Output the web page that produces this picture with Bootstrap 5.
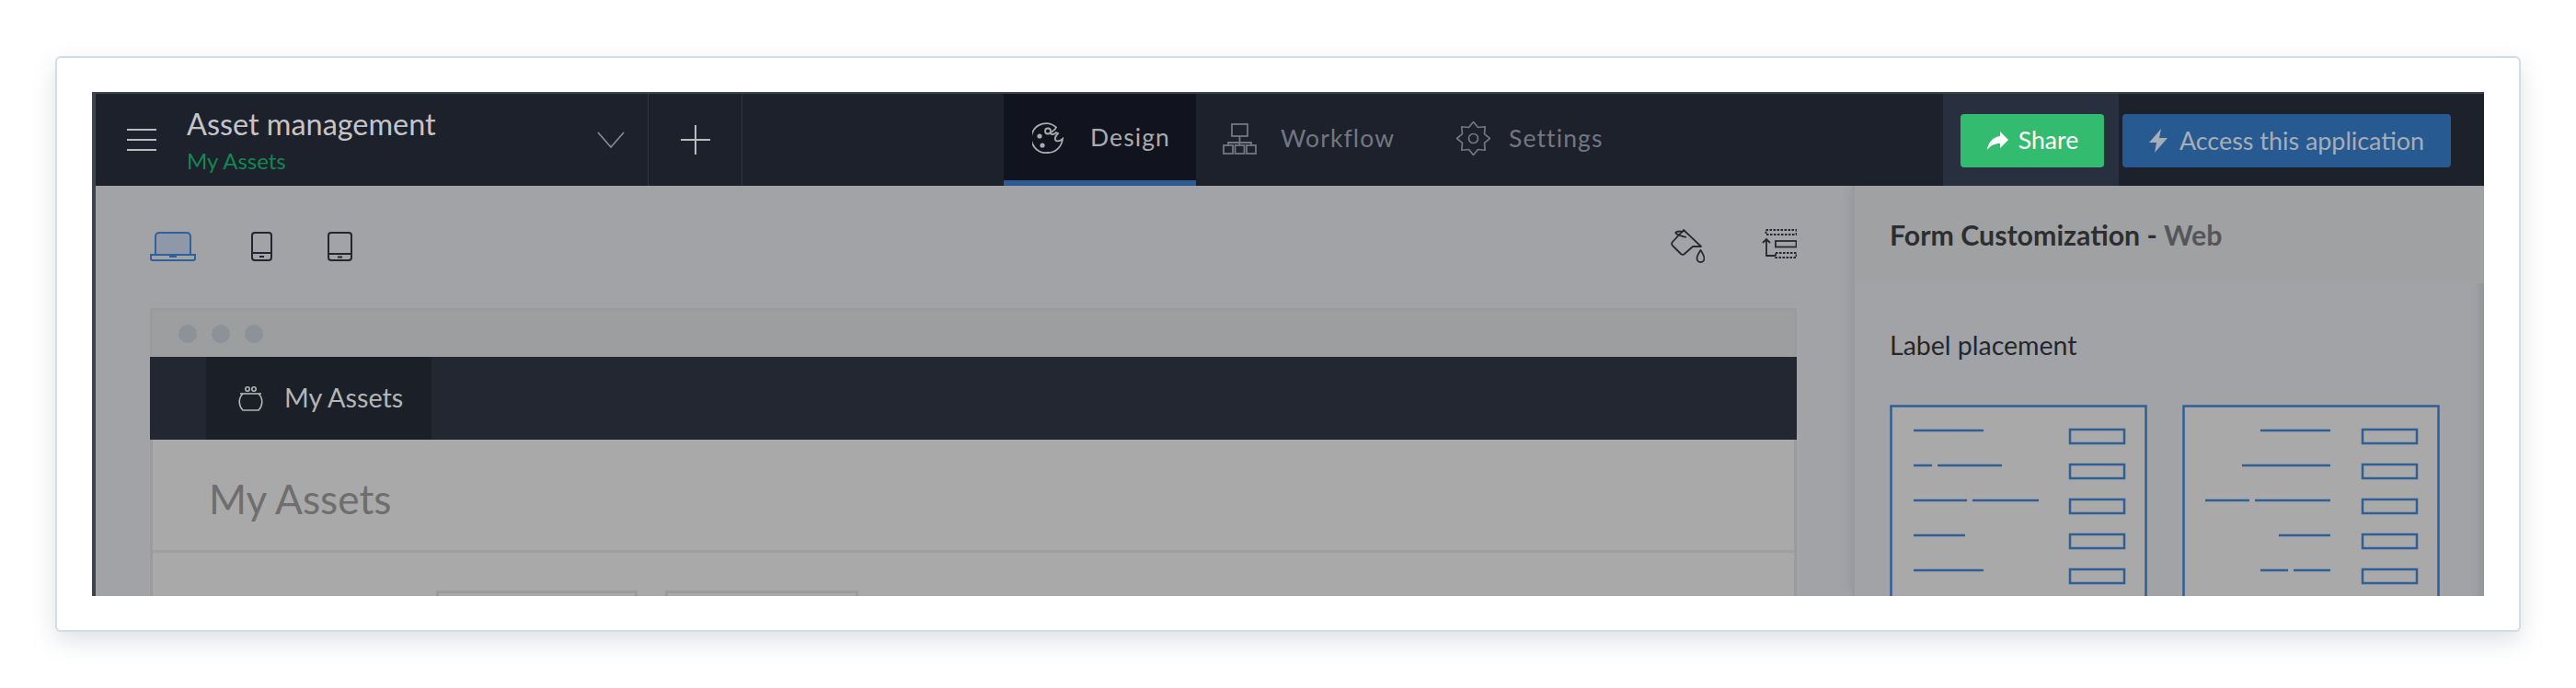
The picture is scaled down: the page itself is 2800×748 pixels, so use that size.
<!doctype html>
<html lang="en">
<head>
<meta charset="utf-8">
<title>Form Customization</title>
<link rel="stylesheet" href="https://cdn.jsdelivr.net/npm/bootstrap@5.3.0/dist/css/bootstrap.min.css">
<style>
html,body{background:#fff;height:748px;overflow:hidden}
body{font-family:Lato,"Liberation Sans",sans-serif;padding:61px 60px 0}
.shot-card{width:2680px;height:626px;padding:38px 39px 0 38px;background:#fff;border:2px solid #d2dde3;border-radius:6px;box-shadow:0 10px 26px rgba(110,125,140,.22)}
.screen{height:548px;overflow:hidden;background:#a2a3a7;border-left:4px solid #3d434f;border-top:2px solid #3d434f;margin:-1px 0 0 0;width:2600px}
.topbar{height:100px;background:#1c212c}
.burger{width:99px}
.burger svg{margin-left:34px}
.app-cell{width:502px;border-right:1px solid #2e3440}
.app-name{font-size:32.4px;line-height:38px;color:#c4c5c8;margin-top:14px}
.app-sub{font-size:24px;line-height:30px;color:#158651;margin-top:6px}
.plus-cell{width:102px;border-right:1px solid #2e3440}
.tab-item{height:100px;font-size:26.5px;letter-spacing:1.1px;color:#727782;text-decoration:none;padding-bottom:3px}
.tab-on{width:209px;padding-left:31px;padding-top:2px;background:#11141e;color:#a9abaf;border-bottom:6px solid #2a5c93;padding-bottom:0}
.tab-gap{margin-left:29px}
.tab-two{margin-left:67px}
.tab-item svg{flex:none}
.tab-on span{margin-left:29px}
.tab-flow span{margin-left:26px}
.tab-gear span{margin-left:20px}
.share-zone{margin-left:auto;width:191px;height:100px;background:#283040;padding:22px 16px 0 19px}
.access-zone{width:397px;padding:22px 36px 0 4px;height:100px}
.btn.share-btn,.btn.access-btn{height:58px;width:100%;padding:0;border:0;border-radius:4px;font-family:inherit;display:flex;align-items:center;justify-content:center}
.btn.share-btn{background:#33bb70;color:#fff;gap:11px;font-size:26.6px}
.btn.access-btn{background:#285a92;color:#a7adb6;gap:13px;font-size:26.9px}
.workarea{height:446px}
.canvas-side{width:1909px;padding:0 60px 0 59px}
.toolbar{height:133px}
.device-set{gap:60px;padding-top:50px;height:100%}
.tool-set{padding-top:47px;height:100%;gap:62px}
.frame-box{border:3px solid #9b9b9c;border-bottom:0;background:#a9a9a9;height:400px}
.frame-dots{height:50px;background:#9d9e9f;padding-left:28px;gap:16px}
.frame-dots i{display:block;width:20px;height:20px;border-radius:50%;background:#8d9299}
.inner-nav{height:90px;background:#232732;margin:0 -3px;padding-left:61px}
.inner-active{width:245px;height:90px;background:#1b1f27;color:#b3b5b8;font-size:28.800px;padding-left:34px;gap:22px}
.inner-title{height:123px;padding:39px 0 0 61px;font-size:44.200px;line-height:50px;color:#6e6e6e;border-bottom:3px solid #9f9f9f}
.inner-fields{padding:41px 0 0 308px;gap:30px}
.inner-fields i{display:block;height:40px;background:#a9a9a9;border:3px solid #9b9b9b}
.field-a{width:219px}
.field-b{width:210px}
.panel-side{width:687px;background:#a2a3a7;border-left:3px solid #989aa0;box-shadow:inset -14px 0 12px -10px rgba(60,60,70,.16),-8px 0 10px -6px rgba(60,60,70,.12)}
.panel-head{height:106px;background:#a0a1a3;padding:33px 0 0 38px;font-size:30.300px;line-height:40px;font-weight:700;color:#2d2e30}
.panel-head span{font-weight:700;color:#555659}
.panel-label{padding:49px 0 0 38px;font-size:28.500px;line-height:36px;color:#26272a}
.thumbs{padding:47px 0 0 38px;gap:38px}
.thumb{display:block;flex:none}
</style>
</head>
<body>
<div class="card shot-card">
  <div class="screen">
    <div class="topbar d-flex">
      <div class="burger d-flex align-items-center">
        <svg width="32" height="24" viewBox="0 0 32 24" fill="none" stroke="#b9bbbe" stroke-width="2"><path d="M0 1h32M0 12h32M0 23h32"/></svg>
      </div>
      <div class="app-cell d-flex">
        <div class="flex-grow-1">
          <div class="app-name">Asset management</div>
          <div class="app-sub">My Assets</div>
        </div>
        <div class="d-flex align-items-center" style="padding-right:25px">
          <svg width="30" height="18" viewBox="0 0 30 18" fill="none" stroke="#8a8d93" stroke-width="1.6"><path d="M1 1l14 16L29 1"/></svg>
        </div>
      </div>
      <div class="plus-cell d-flex align-items-center justify-content-center">
        <svg width="32" height="32" viewBox="0 0 32 32" fill="none" stroke="#b9bbbe" stroke-width="2"><path d="M16 0v32M0 16h32"/></svg>
      </div>
      <div style="width:284px"></div>
      <a class="tab-item tab-on d-flex align-items-center" href="#">
        <svg width="34" height="34" viewBox="0 0 34 34" fill="none" stroke="#a9abaf" stroke-width="1.8"><path d="M26 5.500A16 16 0 1 0 17 33c8 0 15-6 16-15-3 3-7 3-8 1-1-3 1-5 3-7l-2-1c-2 2-5 3-6 1 0-2 5-3 6-6.500z"/><circle cx="17" cy="9.500" r="3"/><circle cx="8" cy="15" r="2.600" fill="#a9abaf" stroke="none"/><circle cx="11" cy="25" r="2.600" fill="#a9abaf" stroke="none"/></svg>
        <span>Design</span>
      </a>
      <a class="tab-item tab-gap tab-flow d-flex align-items-center" href="#">
        <svg width="37" height="34" viewBox="0 0 37 34" fill="none" stroke="#727782" stroke-width="1.800"><rect x="10" y="1" width="17" height="13"/><path d="M18.500 14v10M6 24v-3h25v3"/><rect x="1" y="24" width="10" height="9"/><rect x="13.500" y="24" width="10" height="9"/><rect x="26" y="24" width="10" height="9"/></svg>
        <span>Workflow</span>
      </a>
      <a class="tab-item tab-two tab-gear d-flex align-items-center" href="#">
        <svg width="37" height="37" viewBox="0 0 37 37" fill="none" stroke="#727782" stroke-width="1.700" stroke-linejoin="round"><polygon transform="translate(18.500 18.500)" points="0,-18 4.970,-12.010 12.730,-12.730 12.010,-4.970 18,0 12.010,4.970 12.730,12.730 4.970,12.010 0,18 -4.970,12.010 -12.730,12.730 -12.010,4.970 -18,0 -12.010,-4.970 -12.730,-12.730 -4.970,-12.010"/><circle cx="18.500" cy="18.500" r="5"/></svg>
        <span>Settings</span>
      </a>
      <div class="share-zone">
        <button class="btn share-btn" type="button">
          <svg width="24" height="20" viewBox="0 0 24 20" fill="#fff"><path d="M15 0l9 9-9 9v-5c-6 0-10 2-14 7 1-8 6-14 14-15z"/></svg>
          Share
        </button>
      </div>
      <div class="access-zone">
        <button class="btn access-btn" type="button">
          <svg width="20" height="26" viewBox="0 0 20 26" fill="#a7adb6"><path d="M13 0L0 15h8L6 26l14-16h-9z"/></svg>
          Access this application
        </button>
      </div>
    </div>
    <div class="workarea d-flex">
      <div class="canvas-side">
        <div class="toolbar d-flex justify-content-between">
          <div class="device-set d-flex align-items-start">
            <svg width="50" height="32" viewBox="0 0 50 32" fill="none" stroke="#2f619b" stroke-width="2"><path d="M6 25V5a4 4 0 0 1 4-4h30a4 4 0 0 1 4 4v20z" fill="#8e98a8"/><path d="M1 25h48v4a2 2 0 0 1-2 2H3a2 2 0 0 1-2-2z" fill="#a2a3a7"/><path d="M21 25h8v3h-8z" fill="#2f619b" stroke="none"/></svg>
            <svg width="23" height="32" viewBox="0 0 23 32" fill="none" stroke="#23262e" stroke-width="2"><rect x="1" y="1" width="21" height="30" rx="3"/><path d="M1 23h21"/><path d="M9 27h5"/></svg>
            <svg width="27" height="32" viewBox="0 0 27 32" fill="none" stroke="#23262e" stroke-width="2"><rect x="1" y="1" width="25" height="30" rx="3"/><path d="M1 24h25"/><path d="M11 27.500h5"/></svg>
          </div>
          <div class="tool-set d-flex align-items-start">
            <svg width="37" height="38" viewBox="0 0 37 38" fill="none" stroke="#26292f" stroke-width="1.800" stroke-linejoin="round"><path d="M14 1l19 18h-9l-9 8a3 3 0 0 1-4 0L2 18a3 3 0 0 1 0-4z"/><path d="M5 4c2-2 7-2 8 0M5 4c1 2 8 4 12 5"/><path d="M32.500 23c-2 3-4 6-4 9a4 4 0 0 0 8 0c0-3-2-6-4-9z"/></svg>
            <svg width="38" height="33" viewBox="0 0 38 33" fill="none" stroke="#26292f" stroke-width="1.800"><rect x="4.500" y="1" width="33" height="5" stroke-dasharray="2.500 1.500"/><rect x="15" y="13" width="22.500" height="6.500"/><rect x="15" y="26" width="22.500" height="5" stroke-dasharray="2.500 1.500"/><path d="M5 12v17h10M1 15l4-4 4 4"/></svg>
          </div>
        </div>
        <div class="frame-box">
          <div class="frame-dots d-flex align-items-center"><i></i><i></i><i></i></div>
          <div class="inner-nav d-flex">
            <div class="inner-active d-flex align-items-center">
              <svg width="29" height="27" viewBox="0 0 29 27" fill="none" stroke="#b3b5b8" stroke-width="1.600"><circle cx="11" cy="3" r="2.200"/><circle cx="18" cy="3" r="2.200"/><path d="M3 8h23"/><path d="M6 8c-6 6-4 14 0 18h17c4-4 6-12 0-18"/></svg>
              <span>My Assets</span>
            </div>
          </div>
          <div class="inner-title">My Assets</div>
          <div class="inner-fields d-flex"><i class="field-a"></i><i class="field-b"></i></div>
        </div>
      </div>
      <div class="panel-side flex-grow-1">
        <div class="panel-head">Form Customization - <span>Web</span></div>
        <div class="panel-label">Label placement</div>
        <div class="thumbs d-flex">
          <svg class="thumb" width="280" height="240" viewBox="0 0 280 240" fill="none" stroke="#2f5f95" stroke-width="2.500">
            <path d="M1.500 240V1.500h277V240" fill="#a9a9a9"/>
            <path d="M26 28h76M26 66h20m6 0h70M26 104h58m6 0h72M26 142h56M26 180h76"/>
            <rect x="196" y="27" width="59" height="15"/><rect x="196" y="65" width="59" height="15"/><rect x="196" y="103" width="59" height="15"/><rect x="196" y="141" width="59" height="15"/><rect x="196" y="179" width="59" height="15"/>
          </svg>
          <svg class="thumb" width="280" height="240" viewBox="0 0 280 240" fill="none" stroke="#2f5f95" stroke-width="2.500">
            <path d="M1.500 240V1.500h277V240" fill="#a9a9a9"/>
            <path d="M85 28h76M65 66h96M25 104h48m6 0h82M105 142h56M85 180h30m6 0h40"/>
            <rect x="196" y="27" width="59" height="15"/><rect x="196" y="65" width="59" height="15"/><rect x="196" y="103" width="59" height="15"/><rect x="196" y="141" width="59" height="15"/><rect x="196" y="179" width="59" height="15"/>
          </svg>
        </div>
      </div>
    </div>
  </div>
</div>
</body>
</html>
